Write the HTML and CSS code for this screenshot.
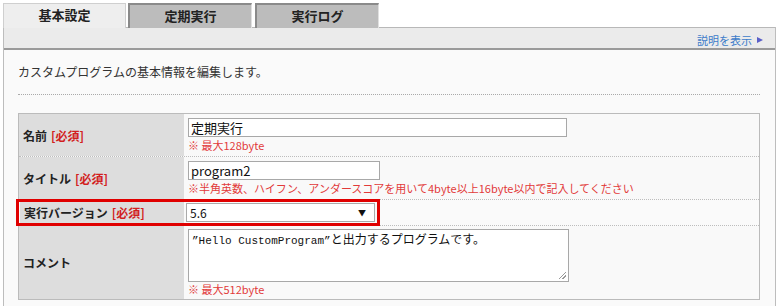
FILE: index.html
```html
<!DOCTYPE html>
<html lang="ja">
<head>
<meta charset="utf-8">
<link rel="stylesheet" href="styles.css">
</head>
<body>
<div class="page">
  <div class="tabs">
    <div class="tab active">基本設定</div>
    <div class="tab">定期実行</div>
    <div class="tab">実行ログ</div>
  </div>
  <div class="panel">
    <div class="bar"><span class="help">説明を表示</span><span class="tri"></span></div>
    <div class="body">
      <p class="desc">カスタムプログラムの基本情報を編集します。</p>
      <div class="sep"></div>
      <div class="form">
        <div class="row r1">
          <div class="label">名前 <span class="req">[必須]</span></div>
          <div class="value">
            <div class="input w-name">定期実行</div>
            <div class="note">※ 最大128byte</div>
          </div>
        </div>
        <div class="row r2">
          <div class="label">タイトル <span class="req">[必須]</span></div>
          <div class="value">
            <div class="input w-title">program2</div>
            <div class="note">※半角英数、ハイフン、アンダースコアを用いて4byte以上16byte以内で記入してください</div>
          </div>
        </div>
        <div class="row r3">
          <div class="hl">
            <div class="label">実行バージョン <span class="req">[必須]</span></div>
            <div class="value">
              <div class="select"><span>5.6</span><span class="arrow">▼</span></div>
            </div>
          </div>
        </div>
        <div class="row r4">
          <div class="label">コメント</div>
          <div class="value">
            <div class="textarea"><span class="mono">”Hello CustomProgram”</span>と出力するプログラムです。<span class="grip"></span></div>
            <div class="note">※ 最大512byte</div>
          </div>
        </div>
      </div>
    </div>
  </div>
</div>
</body>
</html>
```

FILE: styles.css
```css
* { box-sizing: border-box; }
html, body { margin: 0; padding: 0; background: #fff; }
body {
  font-family: "Noto Sans CJK JP", "Noto Sans", sans-serif;
  font-size: 12px;
  color: #333;
}
.page { padding: 3px 4px 0 3px; width: 780px; }
.tabs { display: flex; height: 25px; }
.tab {
  width: 124px;
  height: 25px;
  margin-right: 3px;
  background: #bcbcbc;
  border-top: 2px solid #8a8a8a;
  border-left: 2px solid #8a8a8a;
  border-right: 1px solid #e0e0e0;
  text-align: center;
  font-weight: bold;
  font-size: 13px;
  line-height: 21px;
  color: #222;
}
.tab.active {
  width: 123px;
  margin-right: 2px;
  background: #eeeeee;
  border-top: 1px solid #cfcfcf;
  border-left: 1px solid #cfcfcf;
  border-right: 1px solid #cfcfcf;
  height: 25px;
  position: relative;
  z-index: 1;
  line-height: 22px;
}
.panel {
  border-left: 1px solid #bdbdbd;
  border-right: 1px solid #bdbdbd;
  margin-top: -1px;
}
.bar {
  height: 23px;
  background: #ebebeb;
  border-top: 1px solid #b8b8b8;
  border-bottom: 2px solid #9a9a9a;
  display: flex;
  justify-content: flex-end;
  align-items: center;
  padding-right: 12px;
  padding-top: 4px;
}
.help { color: #3d7cc9; font-size: 11px; }
.tri {
  width: 0; height: 0;
  border-left: 6px solid #5a5fc8;
  border-top: 3.5px solid transparent;
  border-bottom: 3.5px solid transparent;
  margin-left: 5px;
}
.body { background: #fafafa; padding: 14px 15px 6px 14px; }
.desc { margin: 0; font-size: 12px; line-height: 16px; color: #333; }
.sep { border-top: 1px dotted #aaa; margin-top: 14px; margin-bottom: 18px; }
.form { border: 1px solid #bbb; border-bottom: 0; }
.row { display: flex; border-bottom: 1px dotted #bdbdbd; }
.label {
  width: 165px;
  flex: none;
  background: #dddddd;
  font-weight: bold;
  font-size: 12px;
  display: flex;
  align-items: center;
  padding-left: 4px;
  color: #222;
}
.req { color: #d21f1f; margin-left: 4px; }
.value { flex: 1; background: #f9f9f9; padding: 4px 4px 2px 4px; }
.r1 { height: 43px; }
.r2 { height: 43px; }
.r3 { height: 26px; }
.r4 { height: 74px; border-bottom: 1px solid #bbb; }
.r4 .value { padding-top: 3px; }
.input {
  height: 19px;
  border: 1px solid #a8a8a8;
  background: #fff;
  font-size: 13px;
  line-height: 17px;
  padding-left: 2px;
  color: #111;
}
.w-name { width: 379px; }
.w-title { width: 192px; }
.note { color: #e23a3a; font-size: 11px; line-height: 16px; white-space: nowrap; }
.hl {
  display: flex;
  flex: 1;
  margin: -1px 0 -1px -3px;
  padding-left: 1px;
  border: 3px solid #e00000;
  max-width: 364px;
}
.hl .label { width: 164px; }
.hl .value { padding: 0 2px; display: flex; align-items: center; }
.select {
  width: 189px;
  height: 19px;
  border: 1px solid #aaa;
  background: #fff;
  display: flex;
  justify-content: space-between;
  align-items: center;
  padding: 0 8px 0 3px;
  font-size: 12px;
  color: #111;
}
.arrow { font-size: 8px; }
.textarea {
  width: 381px;
  height: 53px;
  border: 1px solid #a8a8a8;
  background: #fff;
  font-size: 12px;
  line-height: 16px;
  padding: 1px 3px;
  position: relative;
  color: #111;
}
.mono {
  font-family: "Liberation Mono", monospace;
  font-size: 11px;
}
.grip {
  position: absolute;
  right: 2px; bottom: 2px;
  width: 7px; height: 7px;
  background: linear-gradient(135deg, transparent 45%, #999 45%, #999 55%, transparent 55%, transparent 70%, #999 70%, #999 80%, transparent 80%);
}
.r4 .note { margin-top: 0; line-height: 14px; }
```
